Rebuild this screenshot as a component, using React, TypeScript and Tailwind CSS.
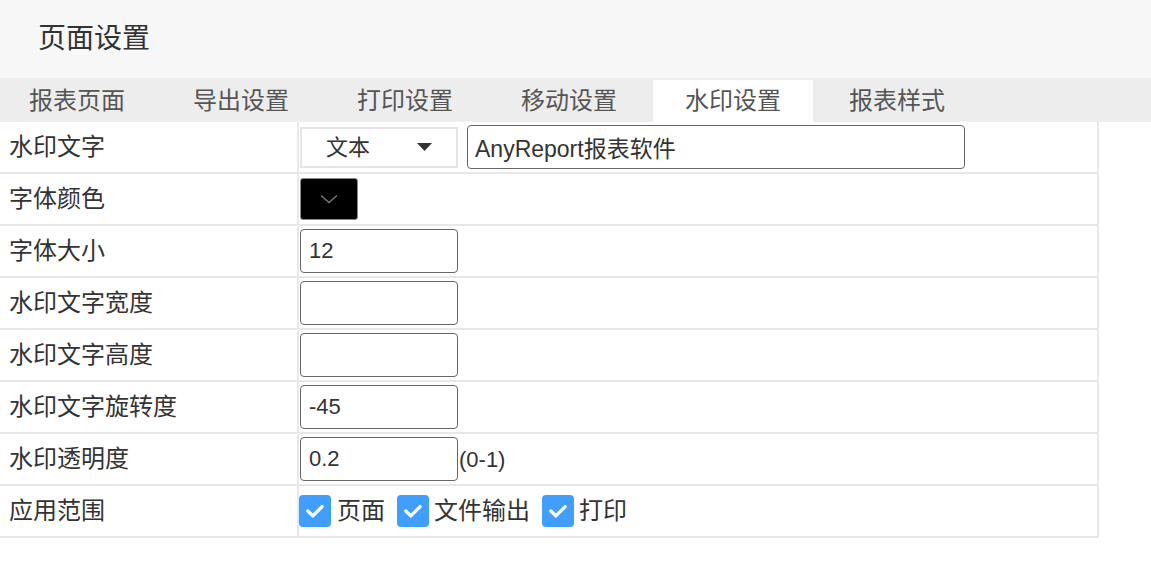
import React from "react";

const tabs = ["报表页面", "导出设置", "打印设置", "移动设置", "水印设置", "报表样式"];

const Check = () => (
  <span className="flex h-8 w-8 items-center justify-center rounded-[4px] bg-[#409eff]">
    <svg className="h-[22px] w-[22px]" viewBox="0 0 20 20" fill="none" stroke="white" strokeWidth={3} strokeLinecap="round" strokeLinejoin="round">
      <path d="M3.5 10l4.5 4.5 8.5-8.5" />
    </svg>
  </span>
);

const Row = ({ label, children }: { label: string; children?: React.ReactNode }) => (
  <div className="flex h-[52px] border-b-2 border-[#e8e8e8]">
    <div className="flex w-[297px] shrink-0 items-center pl-[9px] text-[24px] text-[#333]">{label}</div>
    <div className="flex flex-1 items-center border-l-2 border-[#e8e8e8]">{children}</div>
  </div>
);

const Box = ({ value }: { value?: string }) => (
  <input
    defaultValue={value}
    className="ml-px h-[44px] w-[158px] rounded-[4px] border-[1.5px] border-[#666] px-[8px] text-[22px] text-[#333] outline-none"
  />
);

export default function App() {
  return (
    <div className="h-[563px] w-[1151px] overflow-hidden bg-white font-['Liberation_Sans','Noto_Sans_CJK_SC',sans-serif]">
      <div className="flex h-[78px] items-center bg-[#f7f7f7] pl-[38px] text-[28px] text-[#333]">页面设置</div>
      <div className="flex h-[44px] items-end overflow-hidden bg-[#ededed]">
        <div className="-ml-[5px] flex h-full">
          {tabs.map((t) => (
            <div key={t} className="flex w-[164px] items-end px-[2px]">
              <div
                className={`flex h-[42px] w-full items-center justify-center text-[24px] text-[#555] ${
                  t === "水印设置" ? "bg-white" : ""
                }`}
              >
                {t}
              </div>
            </div>
          ))}
        </div>
      </div>
      <div className="w-[1099px] border-r-2 border-[#e8e8e8]">
        <Row label="水印文字">
          <div className="ml-px flex h-[41px] w-[158px] items-center justify-between border-2 border-[#e6e6e6] pl-[24px] pr-[24px] text-[22px] text-[#333]">
            <span>文本</span>
            <svg className="h-[8px] w-[15px]" viewBox="0 0 15 8">
              <path d="M0 0h15L7.5 8z" fill="#333" />
            </svg>
          </div>
          <input
            defaultValue="AnyReport报表软件"
            className="ml-[9px] h-[44px] w-[498px] rounded-[4px] border-[1.5px] border-[#666] px-[7px] text-[23px] text-[#333] outline-none"
          />
        </Row>
        <Row label="字体颜色">
          <div className="ml-px flex h-[42px] w-[58px] items-center justify-center rounded-[3px] border border-[#8a8a8a] bg-black">
            <svg className="h-[10px] w-[20px]" viewBox="0 0 20 10" fill="none" stroke="#777" strokeWidth={1.5}>
              <path d="M2 1.5l8 7 8-7" />
            </svg>
          </div>
        </Row>
        <Row label="字体大小">
          <Box value="12" />
        </Row>
        <Row label="水印文字宽度">
          <Box />
        </Row>
        <Row label="水印文字高度">
          <Box />
        </Row>
        <Row label="水印文字旋转度">
          <Box value="-45" />
        </Row>
        <Row label="水印透明度">
          <Box value="0.2" />
          <span className="ml-px text-[22px] text-[#333]">(0-1)</span>
        </Row>
        <Row label="应用范围">
          <div className="flex items-center text-[24px] text-[#333]">
            <Check />
            <span className="ml-[6px] mr-[12px]">页面</span>
            <Check />
            <span className="ml-[5px] mr-[12px]">文件输出</span>
            <Check />
            <span className="ml-[5px]">打印</span>
          </div>
        </Row>
      </div>
    </div>
  );
}
